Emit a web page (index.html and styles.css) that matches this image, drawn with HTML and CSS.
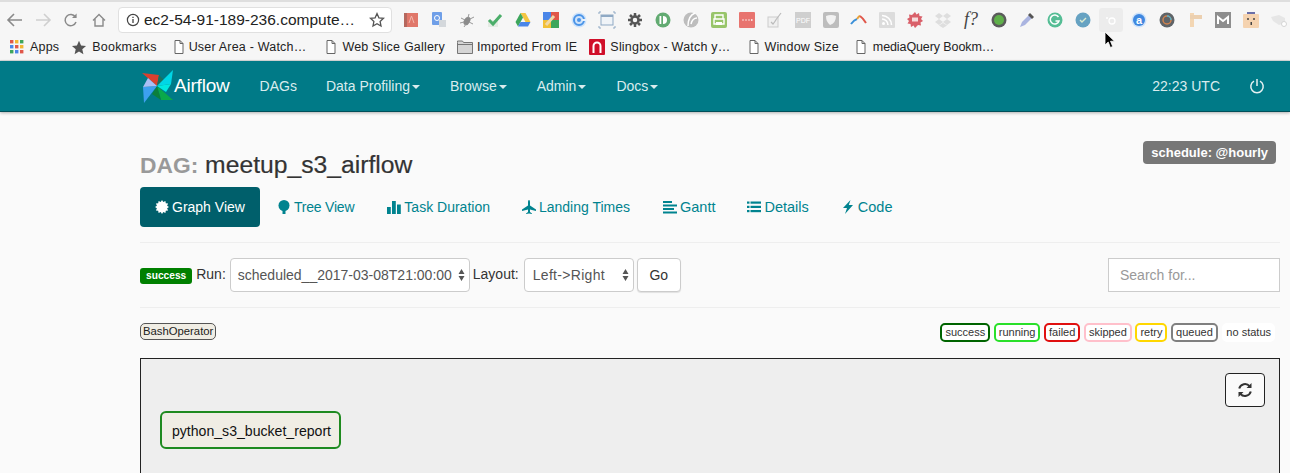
FILE: index.html
```html
<!DOCTYPE html>
<html lang="en">
<head>
    <meta charset="UTF-8">
    <title>Airflow - meetup_s3_airflow</title>
    <link rel="stylesheet" href="styles.css">
</head>
<body>
    <!-- browser chrome -->
    <div class="tabstrip"></div>
    <div class="toolbar">
        <div class="toolbar-nav">
            <svg width="28" height="24" viewBox="0 0 28 24"><path d="M21 12H8M13 6l-6 6 6 6" fill="none" stroke="#8a8a8a" stroke-width="1.6"/></svg>
            <svg width="28" height="24" viewBox="0 0 28 24"><path d="M7 12h13M15 6l6 6-6 6" fill="none" stroke="#cfcfcf" stroke-width="1.6"/></svg>
            <svg width="28" height="24" viewBox="0 0 28 24"><path d="M19 14a5.6 5.6 0 1 1-.6-5" fill="none" stroke="#8a8a8a" stroke-width="1.5"/><path d="M19.6 5.5v4.6H15z" fill="#8a8a8a"/></svg>
            <svg width="28" height="24" viewBox="0 0 28 24"><path d="M8 12.5l6-6 6 6M10 11v7h8v-7" fill="none" stroke="#8a8a8a" stroke-width="1.4"/></svg>
        </div>
        <div class="omnibox">
            <svg width="14" height="14" viewBox="0 0 14 14"><circle cx="7" cy="7" r="5.6" fill="none" stroke="#444" stroke-width="1.2"/><path d="M7 6v4M7 3.7v1.3" stroke="#444" stroke-width="1.3"/></svg>
            <span class="url">ec2-54-91-189-236.compute…</span>
            <svg class="url-star" width="16" height="16" viewBox="0 0 16 16"><path d="M8 1.6l1.9 4.2 4.6.5-3.4 3.1.9 4.6L8 11.7 4 14l.9-4.6L1.500 6.300l4.600-.5z" fill="none" stroke="#555" stroke-width="1.300"/></svg>
        </div>
        <div class="extensions">
            <svg viewBox="0 0 16 16"><rect x="1" y="1" width="14" height="14" fill="#e0776a"/><rect x="1" y="1" width="3" height="14" fill="#b5685e"/><path d="M6 11l2.500-7 2.500 7" fill="none" stroke="#f2b8ad"/></svg>
            <svg viewBox="0 0 16 16"><rect x="1" y="0" width="10" height="13" rx="1" fill="#6f9fe8"/><rect x="8" y="8" width="7" height="7" fill="#d4d8dc"/><circle cx="6" cy="6" r="2.500" fill="none" stroke="#fff"/></svg>
            <svg viewBox="0 0 16 16"><ellipse cx="8" cy="9" rx="3" ry="4.500" fill="#8c8c8c" transform="rotate(30 8 9)"/><path d="M2 6l4 2M1 11l4-1M5 15l2-3M10 2l-1 4M15 5l-4 2M14 12l-4-2" stroke="#999"/></svg>
            <svg viewBox="0 0 16 16"><rect x="1" y="8" width="10" height="7" fill="#e3ebe3"/><path d="M2 8l4 4 8-9" fill="none" stroke="#4bae6a" stroke-width="3"/></svg>
            <svg viewBox="0 0 16 16"><path d="M5.500 1h5l5 9h-5z" fill="#f4c542"/><path d="M5.500 1L.5 10l2.500 4.500L8 5.500z" fill="#3da65c"/><path d="M3 14.500h10l2.500-4.500H5.500z" fill="#4a86e8"/></svg>
            <svg viewBox="0 0 16 16"><rect width="8" height="8" fill="#4a86e8"/><rect x="8" width="8" height="8" fill="#e0574a"/><rect y="8" width="8" height="8" fill="#f2c037"/><rect x="8" y="8" width="8" height="8" fill="#3da65c"/><path d="M3 13L11 4" stroke="#f0d8a8" stroke-width="3"/></svg>
            <svg viewBox="0 0 16 16"><circle cx="8" cy="8" r="7.500" fill="#cfe3fa"/><circle cx="8" cy="8" r="5" fill="none" stroke="#4a94e8" stroke-width="2"/><circle cx="8" cy="8" r="2" fill="#4a94e8"/><rect x="11" y="7" width="5" height="2" fill="#e8f1fb"/></svg>
            <svg viewBox="0 0 16 16"><rect x="2" y="3" width="12" height="10" fill="#f0f4f8" stroke="#8fa9c4"/><rect x="2" y="3" width="12" height="2" fill="#8fa9c4"/><path d="M0 2V0h2M14 0h2v2M0 14v2h2M16 14v2h-2" fill="none" stroke="#8fa9c4"/></svg>
            <svg viewBox="0 0 16 16"><circle cx="8" cy="8" r="3.500" fill="none" stroke="#555" stroke-width="2.500"/><path d="M8 1v3M8 12v3M1 8h3M12 8h3M3 3l2 2M11 11l2 2M13 3l-2 2M5 11l-2 2" stroke="#555" stroke-width="2.500"/></svg>
            <svg viewBox="0 0 16 16"><circle cx="8" cy="8" r="7.500" fill="#62ab72"/><rect x="4.500" y="4" width="1.800" height="8" fill="#fff"/><path d="M8 4a4 4 0 0 1 0 8z" fill="#fff"/></svg>
            <svg viewBox="0 0 16 16"><circle cx="8" cy="8" r="7.500" fill="#bdbdbd"/><path d="M12 1C7 3 5 7 5 14M14 6c-3 0-5 2-6 6" fill="none" stroke="#fff" stroke-width="1.500"/></svg>
            <svg viewBox="0 0 16 16"><rect width="16" height="16" rx="2" fill="#98c56a"/><path d="M4 7V3h8v4M3 7h10v5H3z" fill="none" stroke="#fff" stroke-width="1.400"/><rect x="5" y="10" width="6" height="3" fill="#fff"/></svg>
            <svg viewBox="0 0 16 16"><rect width="16" height="16" rx="1" fill="#e8746f"/><path d="M3.500 8h1M6.500 8h1M9.500 8h1M12 8h1.500" stroke="#fff" stroke-width="1.500"/></svg>
            <svg viewBox="0 0 16 16"><rect x="1" y="5" width="10" height="10" fill="#f0f0f0" stroke="#ccc"/><path d="M4 10l2 2 3-4M8 9l6-8" fill="none" stroke="#bbb" stroke-width="1.200"/></svg>
            <svg viewBox="0 0 16 16"><rect width="16" height="16" fill="#cfcfcf"/><text x="8" y="11" class="ext-pdf">PDF</text></svg>
            <svg viewBox="0 0 16 16"><rect width="16" height="16" rx="2" fill="#bdbdbd"/><path d="M3 4q5-2 10 0 0 7-6 9-4-3-4-9z" fill="#f2f2f2"/></svg>
            <svg viewBox="0 0 16 16"><path d="M0 12Q3 8 6 7" fill="none" stroke="#3a8fd8" stroke-width="2"/><path d="M6 7q2-3 3-3" fill="none" stroke="#e8a33d" stroke-width="2"/><path d="M9 4q3 2 6 7" fill="none" stroke="#e0574a" stroke-width="2"/></svg>
            <svg viewBox="0 0 16 16"><rect width="16" height="16" rx="1" fill="#dcdcdc"/><circle cx="4.500" cy="11.500" r="1.500" fill="#fff"/><path d="M3 7a6 6 0 0 1 6 6M3 3.500A9.500 9.500 0 0 1 12.500 13" fill="none" stroke="#fff" stroke-width="1.600"/></svg>
            <svg viewBox="0 0 16 16"><path d="M8 0l1.500 2.500L12 1l.5 3 3 .5-1.500 2.500L16 9l-2.500 1.500.5 3-3-.5L8 16l-1.500-2.500L4 15l-.5-3-3-.5L2 9 0 7l2.500-1.500L2 2.500l3 .5z" fill="#d9606a"/><rect x="5" y="5.500" width="6" height="4" fill="#f6dcdc"/></svg>
            <svg viewBox="0 0 16 16"><path d="M4 1L8 4 4 7 0 4zM12 1l4 3-4 3-4-3zM4 7l4 3-4 3-4-3zM12 7l4 3-4 3-4-3zM4 13.500l4-2.500 4 2.500L8 16z" fill="#dedede"/></svg>
            <svg viewBox="0 0 16 16" class="ext-wide"><text x="8" y="13" class="ext-f">f?</text></svg>
            <svg viewBox="0 0 16 16"><circle cx="8" cy="8" r="7.500" fill="#5b5b5b"/><circle cx="8" cy="8" r="5" fill="#5fb04a"/></svg>
            <svg viewBox="0 0 16 16"><path d="M1 15l2-5 7-7 3 3-7 7z" fill="#aab4e0"/><path d="M9 3l2-2 4 4-2 2z" fill="#555"/></svg>
            <svg viewBox="0 0 16 16"><circle cx="8" cy="8" r="7.500" fill="#55bd95"/><path d="M11.500 5A4.500 4.500 0 1 0 12 9H8.500" fill="none" stroke="#fff" stroke-width="1.500"/></svg>
            <svg viewBox="0 0 16 16"><circle cx="8" cy="8" r="7.500" fill="#66a2c2"/><path d="M5 8l2 2 4-4" fill="none" stroke="#dcebd0" stroke-width="1.400"/></svg>
            <svg class="ext-hover" viewBox="0 0 16 16"><circle cx="9" cy="9" r="3" fill="none" stroke="#fff" stroke-width="1.300"/><circle cx="4" cy="6" r="1" fill="#fff"/></svg>
            <svg viewBox="0 0 16 16"><circle cx="8" cy="8" r="7.500" fill="#cfe3fa"/><circle cx="8" cy="8" r="6" fill="#3f88e0"/><text x="8" y="11.500" class="ext-a">a</text></svg>
            <svg viewBox="0 0 16 16"><circle cx="8" cy="8" r="7.500" fill="#5f6468"/><circle cx="8" cy="8" r="4" fill="none" stroke="#d0824e" stroke-width="1.500"/><path d="M8 4a4 4 0 0 1 4 4" fill="none" stroke="#5bb0c8" stroke-width="1.500"/></svg>
            <svg viewBox="0 0 16 16"><rect x="3" y="1" width="4" height="14" fill="#f3d6b3"/><rect x="3" y="3" width="12" height="4" fill="#ecd0b0"/></svg>
            <svg viewBox="0 0 16 16"><rect width="16" height="16" fill="#8e8e8e"/><path d="M3 12V5l5 4 5-4v7" fill="none" stroke="#fff" stroke-width="2"/></svg>
            <svg viewBox="0 0 16 16"><rect y="2" width="16" height="14" rx="1" fill="#f5d3b0"/><rect x="4" width="8" height="2" fill="#6a6fa8"/><circle cx="5" cy="7" r="1" fill="#444"/><circle cx="11" cy="7" r="1" fill="#444"/><rect x="7.500" y="10" width="1.500" height="3" fill="#444"/></svg>
            <svg viewBox="0 0 16 16"><path d="M0 5l8-2 6 3v5l-6 2-6-4z" fill="#e6e6e6"/><circle cx="13" cy="12" r="2.500" fill="#fff" stroke="#d5d5d5"/></svg>
        </div>
    </div>
    <div class="bookmarks">
        <span class="bookmark">
            <svg class="apps-icon" viewBox="0 0 14 14"><rect width="3.400" height="3.400" fill="#e0574a"/><rect x="5" width="3.400" height="3.400" fill="#f2b632"/><rect x="10" width="3.400" height="3.400" fill="#3da65c"/><rect y="5" width="3.400" height="3.400" fill="#4a86e8"/><rect x="5" y="5" width="3.400" height="3.400" fill="#e0574a"/><rect x="10" y="5" width="3.400" height="3.400" fill="#f2b632"/><rect y="10" width="3.400" height="3.400" fill="#3da65c"/><rect x="5" y="10" width="3.400" height="3.400" fill="#4a86e8"/><rect x="10" y="10" width="3.400" height="3.400" fill="#e0574a"/></svg>
            Apps
        </span>
        <span class="bookmark">
            <svg width="16" height="15" viewBox="0 0 16 16"><path d="M8 .8l2.200 5 5.300.5-4 3.500 1.200 5.300L8 12.300l-4.700 2.800 1.200-5.300-4-3.500 5.300-.5z" fill="#555"/></svg>
            Bookmarks
        </span>
        <span class="bookmark bm-user">
            <svg class="doc-icon" viewBox="0 0 10 14"><path d="M1 .5h5l3 3v10H1zM6 .5v3h3" fill="#fff" stroke="#666"/></svg>
            User Area - Watch…
        </span>
        <span class="bookmark bm-slice">
            <svg class="doc-icon" viewBox="0 0 10 14"><path d="M1 .5h5l3 3v10H1zM6 .5v3h3" fill="#fff" stroke="#666"/></svg>
            Web Slice Gallery
        </span>
        <span class="bookmark bm-folder">
            <svg width="16" height="14" viewBox="0 0 16 14"><path d="M.5 2.500V1h5l1 1.500h9v11H.5z" fill="#d5d5d5" stroke="#777"/><path d="M.5 4.500h15" stroke="#777"/></svg>
            Imported From IE
        </span>
        <span class="bookmark">
            <svg width="16" height="16" viewBox="0 0 16 16"><rect width="16" height="16" rx="1" fill="#d0102a"/><path d="M4.500 14V7a3.500 3.500 0 0 1 7 0v7" fill="none" stroke="#fff" stroke-width="2"/></svg>
            Slingbox - Watch y…
        </span>
        <span class="bookmark bm-size">
            <svg class="doc-icon" viewBox="0 0 10 14"><path d="M1 .5h5l3 3v10H1zM6 .5v3h3" fill="#fff" stroke="#666"/></svg>
            Window Size
        </span>
        <span class="bookmark bm-media">
            <svg class="doc-icon" viewBox="0 0 10 14"><path d="M1 .5h5l3 3v10H1zM6 .5v3h3" fill="#fff" stroke="#666"/></svg>
            mediaQuery Bookm…
        </span>
    </div>

    <!-- airflow nav -->
    <nav class="navbar">
        <a class="brand">
            <svg width="34" height="34" viewBox="0 0 34 34">
                <path d="M2 4l17 2-2 11z" fill="#d9402f"/>
                <path d="M19 6l5 5-7 6z" fill="#1d6f5c"/>
                <path d="M33 1l-2 14-14 2z" fill="#00d6e6"/>
                <path d="M31 15l-5 8-9-6z" fill="#00e8e0"/>
                <path d="M17 17l16 14H21z" fill="#0aa84a"/>
                <path d="M17 17l4 14-9-6z" fill="#0b7f3c"/>
                <path d="M17 17L4 34 3 18z" fill="#3da0ef"/>
                <path d="M17 17L3 18l5-9z" fill="#a9bff5"/>
            </svg>
            <span>Airflow</span>
        </a>
        <ul class="nav-links">
            <li>DAGs</li>
            <li class="dropdown">Data Profiling</li>
            <li class="dropdown">Browse</li>
            <li class="dropdown">Admin</li>
            <li class="dropdown">Docs</li>
        </ul>
        <div class="nav-right">
            <span>22:23 UTC</span>
            <svg width="16" height="16" viewBox="0 0 16 16"><path d="M5 3.200a6.200 6.200 0 1 0 6 0M8 1v7" fill="none" stroke="#e6f1f2" stroke-width="1.500"/></svg>
        </div>
    </nav>

    <div class="container">
        <div class="dag-head">
            <h1><span class="dag-label">DAG:</span> meetup_s3_airflow</h1>
            <span class="schedule">schedule: @hourly</span>
        </div>

        <ul class="tabs">
            <li class="active">
                <svg viewBox="0 0 14 14"><path d="M7 0l1.300 1.900L10.400.9l.4 2.300 2.300.4-1 2.100L14 7l-1.900 1.300 1 2.100-2.300.4-.4 2.300-2.100-1L7 14l-1.300-1.900-2.100 1-.4-2.300-2.300-.4 1-2.100L0 7l1.900-1.300-1-2.100 2.300-.4.4-2.300 2.100 1z"/></svg>
                Graph View
            </li>
            <li class="tab-tree">
                <svg viewBox="0 0 14 14"><circle cx="7" cy="5.500" r="5.500"/><rect x="5.500" y="8" width="3" height="6"/></svg>
                Tree View
            </li>
            <li class="tab-duration">
                <svg viewBox="0 0 14 14"><rect y="7" width="3.800" height="7"/><rect x="5" y="1" width="3.800" height="13"/><rect x="10" y="4.500" width="3.800" height="9.500"/></svg>
                Task Duration
            </li>
            <li>
                <svg viewBox="0 0 14 14"><path d="M7 0q1 0 1 2v3.500l6 4v1.500L8 9.500v2.500l2 1.500v.5L7 13.500 4 14v-.5L6 12V9.500L0 11V9.500l6-4V2q0-2 1-2z"/></svg>
                Landing Times
            </li>
            <li class="tab-wide tab-gantt">
                <svg viewBox="0 0 14 14"><rect y="1" width="9" height="2"/><rect y="4.500" width="14" height="2"/><rect y="8" width="11" height="2"/><rect y="11.500" width="14" height="2"/></svg>
                Gantt
            </li>
            <li class="tab-wide">
                <svg viewBox="0 0 14 14"><rect y="1.500" width="2.500" height="2.200"/><rect x="3.500" y="1.500" width="10.500" height="2.200"/><rect y="5.800" width="2.500" height="2.200"/><rect x="3.500" y="5.800" width="10.500" height="2.200"/><rect y="10" width="2.500" height="2.200"/><rect x="3.500" y="10" width="10.500" height="2.200"/></svg>
                Details
            </li>
            <li class="tab-wide">
                <svg viewBox="0 0 14 14"><path d="M9.500 0L2 8h4L4 14l8-9H7.800z"/></svg>
                Code
            </li>
        </ul>

        <hr class="rule">

        <div class="controls">
            <span class="state-label">success</span>
            <span class="ctl-text ctl-run">Run:</span>
            <div class="select select-run">
                <span>scheduled__2017-03-08T21:00:00</span>
                <svg width="7" height="14" viewBox="0 0 7 14"><path d="M3.500 1L6.500 6H.5zM3.500 13L.5 8h6z" fill="#555"/></svg>
            </div>
            <span class="ctl-text">Layout:</span>
            <div class="select select-layout">
                <span>Left-&gt;Right</span>
                <svg width="7" height="14" viewBox="0 0 7 14"><path d="M3.500 1L6.500 6H.5zM3.500 13L.5 8h6z" fill="#555"/></svg>
            </div>
            <button class="go-btn">Go</button>
            <input class="search" type="text" placeholder="Search for...">
        </div>

        <hr class="rule rule-second">

        <div class="legend">
            <span class="operator">BashOperator</span>
            <div class="states">
                <span class="state st-success">success</span>
                <span class="state st-running">running</span>
                <span class="state st-failed">failed</span>
                <span class="state st-skipped">skipped</span>
                <span class="state st-retry">retry</span>
                <span class="state st-queued">queued</span>
                <span class="state st-none">no status</span>
            </div>
        </div>

        <div class="graph">
            <button class="refresh">
                <svg width="16" height="16" viewBox="0 0 16 16"><path d="M2.200 6.500A6 6 0 0 1 12.600 4.200M13.800 9.500A6 6 0 0 1 3.400 11.800" fill="none" stroke="#333" stroke-width="2"/><path d="M14.500 1v5h-5zM1.500 15v-5h5z" fill="#333"/></svg>
            </button>
            <div class="node">python_s3_bucket_report</div>
        </div>
    </div>

    <!-- mouse pointer from the capture -->
    <svg class="cursor" width="12" height="18" viewBox="0 0 12 18"><path d="M1 1v13l3.200-3 2.200 5.500 2.300-1-2.200-5.300H10.500z" fill="#000" stroke="#fff" stroke-width=".8"/></svg>
</body>
</html>
```

FILE: styles.css
```css
html, body {
    height: 473px;
    overflow: hidden;
}

body {
    font-family: "Liberation Sans", Arial, sans-serif;
    font-size: 14px;
    margin: 0;
    padding: 0;
    background-color: #fafafa;
    color: #333;
}

/* browser chrome */
.tabstrip {
    height: 2px;
    background-color: #dedede;
}

.toolbar {
    display: flex;
    align-items: center;
    height: 35px;
    background-color: #f6f6f6;
}

.toolbar-nav {
    display: flex;
    width: 118px;
    padding-left: 1px;
    box-sizing: border-box;
}

.omnibox {
    display: flex;
    align-items: center;
    box-sizing: border-box;
    width: 274px;
    height: 26px;
    padding: 0 6px 0 7px;
    background-color: #fff;
    border: 1px solid #e0e0e0;
    border-radius: 4px;
}

.url {
    margin-left: 4px;
    font-size: 15.500px;
    color: #222;
    white-space: nowrap;
}

.url-star {
    margin-left: auto;
}

.extensions {
    display: flex;
    gap: 12px;
    margin-left: 11px;
}

.extensions svg {
    width: 16px;
    height: 16px;
    flex: none;
    overflow: visible;
}

.extensions .ext-hover {
    background-color: #ececec;
    box-shadow: 0 0 0 4px #ececec;
    border-radius: 1px;
}

.ext-pdf {
    font-size: 7px;
    fill: #fff;
    text-anchor: middle;
}

.ext-f {
    font-family: "Liberation Serif", serif;
    font-style: italic;
    font-size: 18px;
    fill: #444;
    text-anchor: middle;
}

.ext-a {
    font-size: 11px;
    font-weight: bold;
    fill: #fff;
    text-anchor: middle;
}

.bookmarks {
    display: flex;
    align-items: center;
    gap: 12px;
    box-sizing: border-box;
    height: 24px;
    padding: 0 0 3px 10px;
    background-color: #f6f6f6;
    border-bottom: 1px solid #d8dcdc;
    font-size: 12.500px;
    letter-spacing: .2px;
    color: #222;
}

.bookmark {
    display: flex;
    align-items: center;
    gap: 5px;
    white-space: nowrap;
}

.bm-user {
    margin-left: 5px;
}

.bm-slice {
    margin-left: 8px;
    gap: 6px;
}

.bm-folder {
    gap: 4px;
}

.bm-size {
    margin-left: 7px;
}

.bm-media {
    margin-left: 5px;
    gap: 7px;
    letter-spacing: -.1px;
}

.apps-icon {
    width: 14px;
    height: 14px;
    margin-right: 1px;
}

.doc-icon {
    width: 10px;
    height: 14px;
}

/* airflow nav */
.navbar {
    display: flex;
    align-items: center;
    box-sizing: border-box;
    height: 51px;
    padding: 0 25px 0 140px;
    background-color: #007a87;
    border-bottom: 1px solid #00505a;
    box-shadow: 0 1px 3px rgba(0, 0, 0, 0.3);
    color: #d9ecee;
}

.brand {
    display: flex;
    align-items: center;
    color: #fff;
    font-size: 19px;
    letter-spacing: -.2px;
}

.nav-links {
    display: flex;
    gap: 30px;
    list-style: none;
    margin: 0 0 0 30px;
    padding: 0;
}

.nav-links li:first-child {
    margin-right: -1px;
}

.dropdown::after {
    content: "";
    display: inline-block;
    margin-left: 2px;
    vertical-align: middle;
    border-top: 4px solid #d9ecee;
    border-left: 4px solid transparent;
    border-right: 4px solid transparent;
}

.nav-right {
    display: flex;
    align-items: center;
    gap: 29px;
    margin-left: auto;
}

/* page */
.container {
    width: 1140px;
    margin-left: 140px;
}

.dag-head {
    display: flex;
    justify-content: space-between;
    align-items: flex-start;
    height: 46px;
    padding-top: 29px;
}

h1 {
    margin: 11px 0 0;
    font-size: 24.700px;
    font-weight: 500;
    line-height: 26px;
    color: #333;
    -webkit-text-stroke: .2px #333;
}

.dag-label {
    color: #999;
    font-size: 22.800px;
    font-weight: bold;
    -webkit-text-stroke: 0;
}

.schedule {
    margin-right: 4px;
    padding: 4px 8px;
    background-color: #777;
    border-radius: 4px;
    color: #fff;
    font-size: 13px;
    font-weight: bold;
    line-height: 15px;
}

.tabs {
    display: flex;
    gap: 2px;
    list-style: none;
    margin: 0;
    padding: 0;
    color: #00838f;
}

.tabs li {
    display: flex;
    align-items: center;
    gap: 3px;
    height: 40px;
    padding: 0 15px;
    border-radius: 4px;
}

.tabs svg {
    width: 14px;
    height: 14px;
    fill: currentColor;
}

.tabs .active {
    background-color: #005f6b;
    color: #fff;
}

.tabs .tab-tree {
    letter-spacing: -.2px;
}

.tabs .tab-duration {
    margin-left: 1px;
}

.tabs .tab-wide {
    font-size: 14.500px;
}

.tabs .tab-gantt {
    margin-left: 1px;
}

.rule {
    height: 1px;
    margin: 15px 0;
    border: 0;
    background-color: #eee;
}

.controls {
    display: flex;
    align-items: center;
    height: 34px;
}

.state-label {
    margin-top: 1px;
    padding: 2px 6px;
    background-color: green;
    border-radius: 3px;
    color: #fff;
    font-size: 10.200px;
    font-weight: bold;
    line-height: 12px;
}

.ctl-text {
    margin: 0 4px 2px 3px;
}

.ctl-run {
    margin-left: 4px;
}

.select {
    display: flex;
    align-items: center;
    justify-content: space-between;
    box-sizing: border-box;
    height: 34px;
    padding: 0 4px 0 8px;
    background-color: #fff;
    border: 1px solid #ccc;
    border-radius: 4px;
    color: #555;
}

.select-run {
    width: 240px;
    padding-left: 7px;
}

.select-layout {
    width: 110px;
    margin-left: 1px;
    letter-spacing: .3px;
}

.go-btn {
    box-sizing: border-box;
    width: 44px;
    height: 34px;
    margin-left: 3px;
    background-color: #fff;
    border: 1px solid #ccc;
    border-radius: 4px;
    box-shadow: 0 1px 1px rgba(0, 0, 0, 0.1);
    color: #333;
    font: inherit;
}

.search {
    box-sizing: border-box;
    width: 172px;
    height: 34px;
    margin-left: auto;
    padding: 0 11px;
    background-color: #fff;
    border: 1px solid #ccc;
    font: inherit;
}

.search::placeholder {
    color: #999;
}

.rule-second {
    margin-bottom: 15px;
}

.legend {
    display: flex;
    justify-content: space-between;
    align-items: flex-start;
    height: 35px;
}

.operator {
    box-sizing: border-box;
    height: 17px;
    padding: 0 2px;
    background-color: #f0ede4;
    border: 1px solid #555;
    border-radius: 5px;
    color: #222;
    font-size: 11.300px;
    line-height: 15px;
}

.states {
    display: flex;
    gap: 3.600px;
    padding-right: 5px;
}

.state {
    box-sizing: border-box;
    height: 19px;
    padding: 0 3px;
    background-color: #fff;
    border: 2px solid #000;
    border-radius: 5px;
    color: #333;
    font-size: 11px;
    line-height: 15px;
}

.st-success { border-color: #006400; }
.st-running { border-color: #2ae02a; }
.st-failed { border-color: #e01010; }
.st-skipped { border-color: #ffc0cb; }
.st-retry { border-color: #ffd700; }
.st-queued { border-color: #808080; }
.st-none { border-color: #fff; margin-left: 1px; padding: 0 2px; }

.graph {
    position: relative;
    box-sizing: border-box;
    height: 300px;
    padding: 52px 19px 0;
    background-color: #eee;
    border: 1px solid #222;
}

.node {
    box-sizing: border-box;
    width: 181px;
    height: 38px;
    padding-left: 2px;
    background-color: #f0ede4;
    border: 2px solid #1f8a1f;
    border-radius: 6px;
    color: #111;
    font-size: 14.100px;
    line-height: 36px;
    text-align: center;
}

.refresh {
    position: absolute;
    top: 14px;
    right: 14px;
    display: flex;
    align-items: center;
    justify-content: center;
    box-sizing: border-box;
    width: 40px;
    height: 34px;
    padding: 0;
    background-color: #fafafa;
    border: 1px solid #222;
    border-radius: 4px;
}

.cursor {
    position: absolute;
    top: 31px;
    left: 1104px;
}
```
